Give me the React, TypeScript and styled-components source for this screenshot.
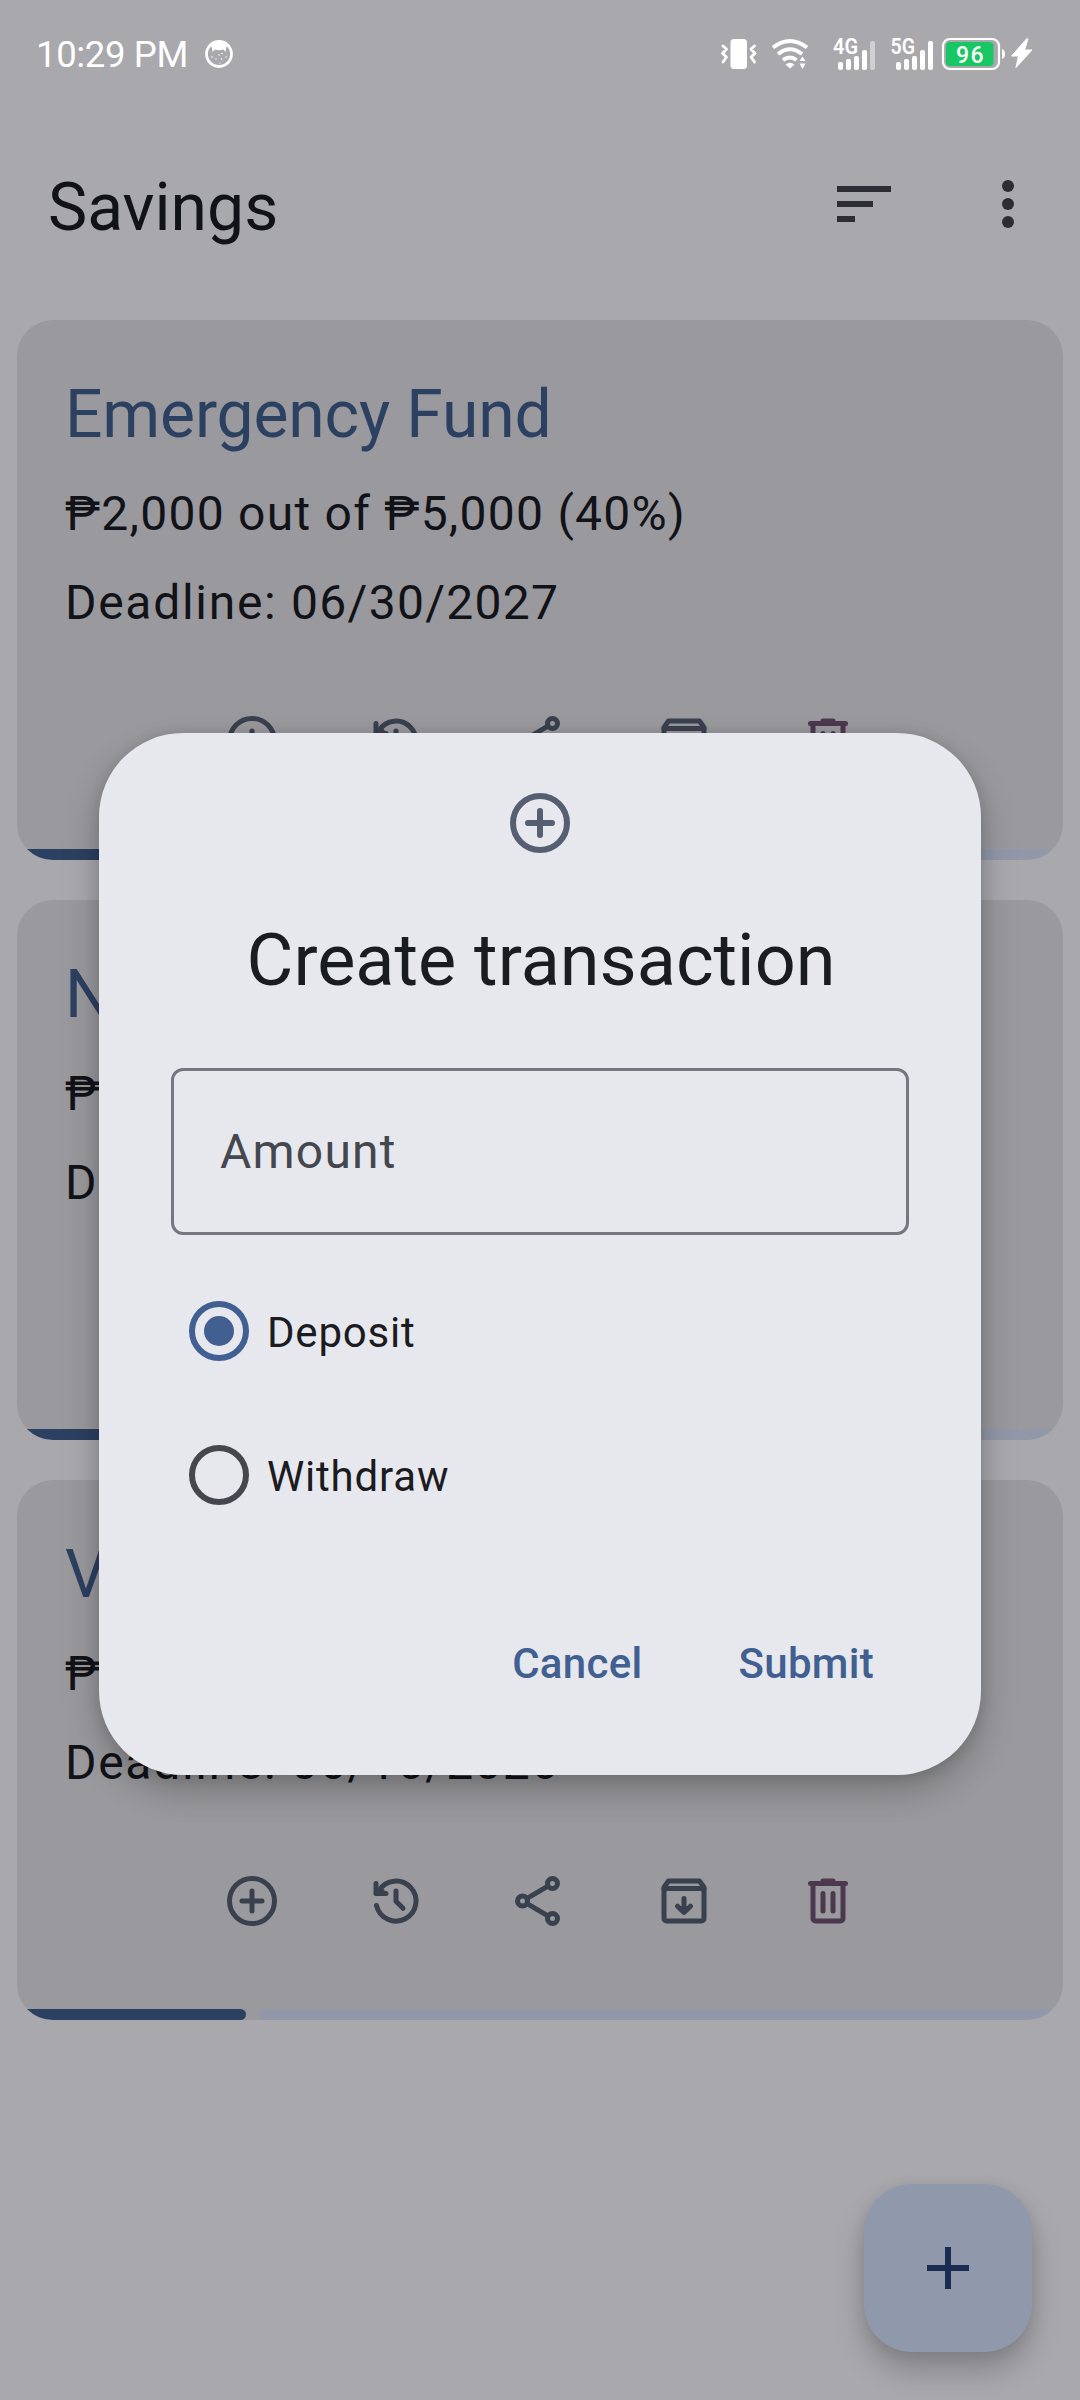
import React from "react";
import styled, { createGlobalStyle } from "styled-components";

const GlobalStyle = createGlobalStyle`
  * { box-sizing: border-box; }
  body { margin: 0; background: #a9a8ad; font-family: Roboto, "Noto Sans", sans-serif; }
`;

const Screen = styled.main`
  position: relative;
  width: 1080px;
  height: 2400px;
  overflow: hidden;
  background: #a9a8ad;
  color: #111318;
`;

const StatusBar = styled.header`
  height: 108px;
  display: flex;
  justify-content: space-between;
  padding: 0 48px 0 36px;
  color: #fff;
`;

const Clock = styled.div`
  display: flex;
  align-items: center;
  gap: 16px;
  font-size: 36.5px;
  letter-spacing: -0.35px;
  line-height: 108px;
  white-space: nowrap;
  svg { margin-top: -1px; }
`;

const ClockText = styled.span`
  padding-top: 2px;
`;

const StatusIcons = styled.svg`
  display: block;
  width: 360px;
  height: 80px;
  margin: 20px -28px 0 0;
`;

const AppBar = styled.div`
  height: 192px;
  display: flex;
  align-items: center;
  padding: 0 36px 0 48px;
`;

const AppTitle = styled.h1`
  flex: 1;
  margin: 8px 0 0;
  font-size: 66px;
  line-height: 84px;
  font-weight: 400;
`;

const BarAction = styled.button`
  width: 72px;
  height: 72px;
  margin-left: 72px;
  padding: 0;
  border: 0;
  background: none;
  color: #2d2e33;
  svg { display: block; }
`;

const GoalList = styled.section`
  display: flex;
  flex-direction: column;
  gap: 40px;
  padding: 20px 17px 0;
`;

const GoalCard = styled.article`
  height: 540px;
  display: flex;
  flex-direction: column;
  overflow: hidden;
  border-radius: 36px;
  background: #9a999d;
`;

const GoalBody = styled.div`
  flex: 1;
  padding: 53px 48px 0;
`;

const GoalName = styled.h2`
  margin: 0 0 4px;
  font-size: 66px;
  line-height: 84px;
  font-weight: 400;
  letter-spacing: -0.15px;
  color: #2c4061;
`;

const GoalLine = styled.p<{ $spacing: number }>`
  margin: 0;
  padding-top: 17px;
  font-size: 48px;
  line-height: 72px;
  letter-spacing: ${(p) => p.$spacing}px;
  white-space: nowrap;
`;

const DateText = styled.span`
  letter-spacing: 1.3px;
`;

const Actions = styled.div`
  display: flex;
  justify-content: center;
  gap: 84px;
  margin-top: 72px;
`;

const ActionIcon = styled.svg<{ $danger?: boolean }>`
  display: block;
  width: 60px;
  height: 60px;
  color: ${(p) => (p.$danger ? "#4d394f" : "#3a414e")};
`;

const Progress = styled.div`
  height: 11px;
  display: flex;
  gap: 13px;
`;

const ProgressFill = styled.div`
  flex: none;
  border-radius: 0 5.5px 5.5px 0;
  background: #2c4061;
`;

const ProgressTrack = styled.div`
  flex: 1;
  border-radius: 5.5px 0 0 5.5px;
  background: #9298a9;
`;

const Fab = styled.button`
  position: absolute;
  right: 48px;
  bottom: 48px;
  width: 168px;
  height: 168px;
  padding: 0;
  display: grid;
  place-items: center;
  border: 0;
  border-radius: 48px;
  background: #9099ac;
  color: #1a2d50;
  box-shadow: 0 18px 30px rgba(0, 0, 0, 0.22), 0 2px 14px rgba(0, 0, 0, 0.08);
`;

const Dialog = styled.div`
  position: absolute;
  left: 99px;
  top: 733px;
  width: 882px;
  height: 1042px;
  display: flex;
  flex-direction: column;
  padding: 54px 72px 0;
  border-radius: 84px;
  background: #e6e8ed;
  box-shadow: 0 16px 36px rgba(0, 0, 0, 0.24), 0 2px 14px rgba(0, 0, 0, 0.12);
`;

const DialogIcon = styled.svg`
  display: block;
  align-self: center;
  width: 72px;
  height: 72px;
  color: #565f71;
`;

const DialogTitle = styled.h2`
  margin: 54px 0 0 2px;
  font-size: 72px;
  line-height: 96px;
  font-weight: 400;
  text-align: center;
  white-space: nowrap;
  color: #191c20;
`;

const Field = styled.label`
  height: 167px;
  margin-top: 59px;
  padding: 0 46px;
  display: flex;
  align-items: center;
  border: 3px solid #747780;
  border-radius: 12px;
  font-size: 48px;
  letter-spacing: 1.2px;
  color: #44474e;
`;

const Options = styled.div`
  display: flex;
  flex-direction: column;
  margin-top: 24px;
  padding-left: 18px;
`;

const Option = styled.label`
  height: 144px;
  display: flex;
  align-items: center;
  gap: 18px;
  font-size: 42px;
  letter-spacing: 0.8px;
  color: #1c1b1f;
`;

const Radio = styled.span<{ $on?: boolean }>`
  width: 60px;
  height: 60px;
  display: grid;
  place-items: center;
  border: 6px solid ${(p) => (p.$on ? "#415f91" : "#44474e")};
  border-radius: 50%;
  &::after {
    content: "";
    width: 30px;
    height: 30px;
    border-radius: 50%;
    background: ${(p) => (p.$on ? "#415f91" : "transparent")};
  }
`;

const OptionText = styled.span`
  padding-top: 3px;
`;

const DialogActions = styled.div`
  display: flex;
  justify-content: flex-end;
  gap: 24px;
  margin: 56px -1px 0 0;
`;

const TextButton = styled.button`
  height: 122px;
  padding: 0 36px;
  border: 0;
  background: none;
  font: 500 42px/60px Roboto, sans-serif;
  letter-spacing: 0.3px;
  color: #415f91;
`;

const line = {
  fill: "none",
  stroke: "currentColor",
  strokeWidth: 2,
  strokeLinecap: "round",
  strokeLinejoin: "round",
} as const;

const AddCircle = () => (
  <g {...line}>
    <circle cx="12" cy="12" r="9" />
    <path d="M12 8v8M8 12h8" />
  </g>
);

const HistoryGlyph = () => (
  <g {...line}>
    <path d="M4.2 13.8A8 8 0 1 0 5.2 7.800" />
    <path d="M4 5v4h4" />
    <path d="M12 8v4.100l2.800 2.800" />
    <path d="M4 9l2-2.400L7 8z" fill="currentColor" strokeWidth="1" />
  </g>
);

const ShareGlyph = () => (
  <g {...line}>
    <circle cx="17" cy="5" r="2" />
    <circle cx="5" cy="12" r="2" />
    <circle cx="17" cy="19" r="2" />
    <path d="M7 10.850L15 6.150M7 13.150L15 17.850" />
  </g>
);

const ArchiveGlyph = () => (
  <g {...line}>
    <path d="M4 6.500V19a1 1 0 0 0 1 1h14a1 1 0 0 0 1-1V6.500L18.200 4H5.800z" />
    <path d="M4 7h16" />
    <path d="M12 11v5M9.400 14.100l2.600 2.500 2.600-2.500" />
    <path d="M10.500 14.500h3L12 16.500z" fill="currentColor" strokeWidth="1" />
  </g>
);

const DeleteGlyph = () => (
  <g {...line}>
    <path d="M5 5h14M10 4h4" />
    <path d="M6 5v14a1 1 0 0 0 1 1h10a1 1 0 0 0 1-1V5M10 9v7M14 9v7" />
  </g>
);

const glyphs = [AddCircle, HistoryGlyph, ShareGlyph, ArchiveGlyph, DeleteGlyph];

const goals = [
  { name: "Emergency Fund", amount: "₱2,000 out of ₱5,000 (40%)", deadline: "06/30/2027", progress: 40 },
  { name: "New Laptop", amount: "₱15,000 out of ₱50,000 (30%)", deadline: "12/31/2026", progress: 30 },
  { name: "Vacation", amount: "₱4,400 out of ₱20,000 (22%)", deadline: "06/16/2026", progress: 21.9 },
];

const SignalBars = ({ x, weak }: { x: number; weak?: boolean }) => (
  <g fill="#fff">
    {[8, 11, 14, 20, 29].map((h, i) => (
      <rect key={i} x={x + i * 8} y={50 - h} width="5" height={h} rx="2" opacity={weak && i === 4 ? 0.45 : 1} />
    ))}
  </g>
);

export default function App() {
  return (
    <Screen>
      <GlobalStyle />
      <StatusBar>
        <Clock>
          <ClockText>10:29 PM</ClockText>
          <svg width="30" height="30" viewBox="0 0 30 30">
            <circle cx="15" cy="15" r="12.5" fill="none" stroke="#fff" strokeWidth="2.8" />
            <path d="M6 6Q15-1 24 6L22 9 21.500 13 19.500 10.500Q15 12 11 10.500L8.500 13 8 9Z" fill="#fff" />
            <g fill="#fff">
              <circle cx="8" cy="18" r=".8" />
              <circle cx="12" cy="20" r=".7" />
              <circle cx="15" cy="16" r=".8" />
              <circle cx="18" cy="14.5" r=".8" />
              <circle cx="17.5" cy="20" r=".8" />
              <circle cx="22" cy="18" r=".7" />
              <circle cx="16" cy="24" r=".6" />
            </g>
          </svg>
        </Clock>
        <StatusIcons viewBox="0 0 360 80" fontFamily="Roboto, sans-serif">
          <g stroke="#fff" strokeWidth="2.8" fill="none" strokeLinecap="round" strokeLinejoin="round">
            <path d="M23 26l3.500 3-4 4.500 4 3.500-3.500 5M54.500 26l-3.500 3 4 4.500-4 3.500 3.500 5" />
          </g>
          <rect x="30.5" y="19" width="16.5" height="30" rx="3.5" fill="#fff" />
          <g stroke="#fff" strokeWidth="4" fill="none">
            <path d="M73 27.500Q90 14.500 107 27.500M78 34Q90 24.500 102 34M83 40Q90 35 96.500 40" />
          </g>
          <path d="M85.500 44.500Q90 41 94.500 44.500L90 48.500ZM99.500 41l3-4.500 3 4.500zM99.500 43.500l3 5.500 3-5.500z" fill="#fff" />
          <text x="133" y="33.5" fontSize="22" fontWeight="600" fill="#fff" textLength="25" lengthAdjust="spacingAndGlyphs">4G</text>
          <SignalBars x={138} weak />
          <text x="190.5" y="33.5" fontSize="22" fontWeight="600" fill="#fff" textLength="24.5" lengthAdjust="spacingAndGlyphs">5G</text>
          <SignalBars x={196} />
          <rect x="243" y="19" width="56" height="30" rx="7" fill="none" stroke="#fff" strokeWidth="2.2" />
          <rect x="246" y="22" width="47.500" height="24" rx="4" fill="#18c763" />
          <path d="M302 29q3 1 3 5t-3 5z" fill="#fff" />
          <text x="256" y="42.5" fontSize="23" fontWeight="500" fill="#fff" textLength="27.5">96</text>
          <path d="M327 18.500L311.500 36h7L316 47.500 332 30h-7.500L328 19z" fill="#fff" stroke="#fff" strokeLinejoin="round" />
        </StatusIcons>
      </StatusBar>

      <AppBar>
        <AppTitle>Savings</AppTitle>
        <BarAction aria-label="Sort">
          <svg width="72" height="72" viewBox="0 0 24 24" fill="currentColor">
            <path d="M3 6h18v2H3zM3 11h12v2H3zM3 16h6v2H3z" />
          </svg>
        </BarAction>
        <BarAction aria-label="More">
          <svg width="72" height="72" viewBox="0 0 24 24" fill="currentColor">
            <circle cx="12" cy="6" r="2" />
            <circle cx="12" cy="12" r="2" />
            <circle cx="12" cy="18" r="2" />
          </svg>
        </BarAction>
      </AppBar>

      <GoalList>
        {goals.map((goal) => (
          <GoalCard key={goal.name}>
            <GoalBody>
              <GoalName>{goal.name}</GoalName>
              <GoalLine $spacing={1.25}>{goal.amount}</GoalLine>
              <GoalLine $spacing={1.7}>
                Deadline: <DateText>{goal.deadline}</DateText>
              </GoalLine>
              <Actions>
                {glyphs.map((Glyph, i) => (
                  <ActionIcon key={i} viewBox="0 0 24 24" $danger={i === 4}>
                    <Glyph />
                  </ActionIcon>
                ))}
              </Actions>
            </GoalBody>
            <Progress>
              <ProgressFill style={{ width: `${goal.progress}%` }} />
              <ProgressTrack />
            </Progress>
          </GoalCard>
        ))}
      </GoalList>

      <Fab aria-label="Add">
        <svg width="72" height="72" viewBox="0 0 24 24" fill="currentColor">
          <path d="M19 13h-6v6h-2v-6H5v-2h6V5h2v6h6z" />
        </svg>
      </Fab>

      <Dialog role="dialog">
        <DialogIcon viewBox="0 0 24 24">
          <AddCircle />
        </DialogIcon>
        <DialogTitle>Create transaction</DialogTitle>
        <Field>Amount</Field>
        <Options>
          <Option>
            <Radio $on />
            <OptionText>Deposit</OptionText>
          </Option>
          <Option>
            <Radio />
            <OptionText>Withdraw</OptionText>
          </Option>
        </Options>
        <DialogActions>
          <TextButton>Cancel</TextButton>
          <TextButton>Submit</TextButton>
        </DialogActions>
      </Dialog>
    </Screen>
  );
}
